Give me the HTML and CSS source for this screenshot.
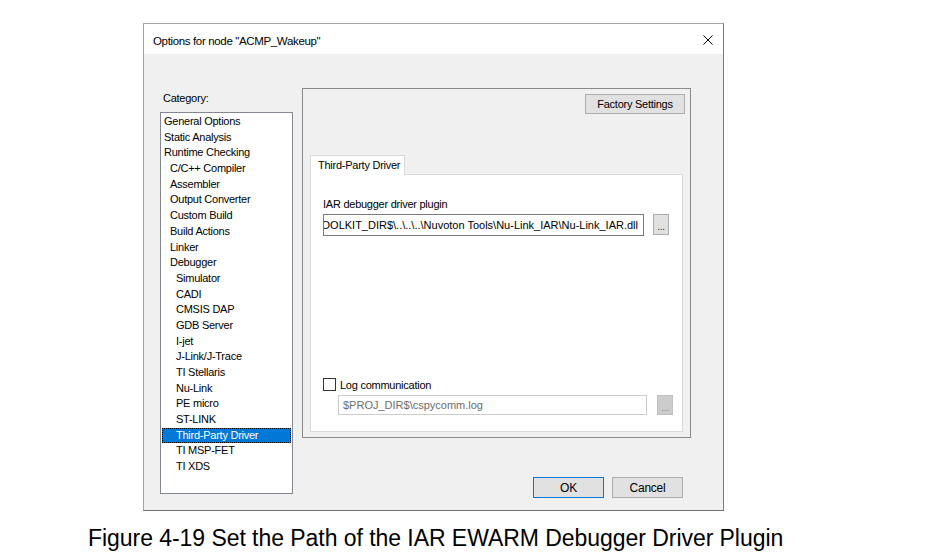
FILE: index.html
```html
<!DOCTYPE html>
<html lang="en">
<head>
    <meta charset="UTF-8">
    <title>Options for node "ACMP_Wakeup"</title>
    <link rel="stylesheet" href="styles.css">
</head>
<body>
    <div class="dialog">
        <div class="titlebar">
            <span class="title">Options for node "ACMP_Wakeup"</span>
            <svg class="close" width="10" height="10" viewBox="0 0 10 10">
                <path d="M0.5 0.5 L9.5 9.5 M9.5 0.5 L0.5 9.5" stroke="#000" stroke-width="1" fill="none"/>
            </svg>
        </div>

        <div class="dialog-body">
            <div class="category">
                <div class="category-label">Category:</div>
                <ul class="category-list">
                    <li>General Options</li>
                    <li>Static Analysis</li>
                    <li>Runtime Checking</li>
                    <li class="lvl1">C/C++ Compiler</li>
                    <li class="lvl1">Assembler</li>
                    <li class="lvl1">Output Converter</li>
                    <li class="lvl1">Custom Build</li>
                    <li class="lvl1">Build Actions</li>
                    <li class="lvl1">Linker</li>
                    <li class="lvl1">Debugger</li>
                    <li class="lvl2">Simulator</li>
                    <li class="lvl2">CADI</li>
                    <li class="lvl2">CMSIS DAP</li>
                    <li class="lvl2">GDB Server</li>
                    <li class="lvl2">I-jet</li>
                    <li class="lvl2">J-Link/J-Trace</li>
                    <li class="lvl2">TI Stellaris</li>
                    <li class="lvl2">Nu-Link</li>
                    <li class="lvl2">PE micro</li>
                    <li class="lvl2">ST-LINK</li>
                    <li class="lvl2 selected">Third-Party Driver</li>
                    <li class="lvl2">TI MSP-FET</li>
                    <li class="lvl2">TI XDS</li>
                </ul>
            </div>

            <div class="right">
                <div class="panel">
                    <div class="panel-top">
                        <button class="btn factory">Factory Settings</button>
                    </div>
                    <div class="tabs">
                        <div class="tab">Third-Party Driver</div>
                    </div>
                    <div class="tab-page">
                        <div class="field-label">IAR debugger driver plugin</div>
                        <div class="field-row">
                            <div class="textbox"><span>$TOOLKIT_DIR$\..\..\..\Nuvoton Tools\Nu-Link_IAR\Nu-Link_IAR.dll</span></div>
                            <button class="btn browse">...</button>
                        </div>

                        <div class="check">
                            <span class="box"></span>
                            <span>Log communication</span>
                        </div>
                        <div class="field-row log-row">
                            <div class="textbox disabled"><span>$PROJ_DIR$\cspycomm.log</span></div>
                            <button class="btn browse disabled">...</button>
                        </div>
                    </div>
                </div>

                <div class="buttons">
                    <button class="btn default">OK</button>
                    <button class="btn">Cancel</button>
                </div>
            </div>
        </div>
    </div>

    <p class="caption">Figure 4-19 Set the Path of the IAR EWARM Debugger Driver Plugin</p>
</body>
</html>
```

FILE: styles.css
```css
body {
    margin: 0;
    padding: 0;
    background: #fff;
    font-family: "Liberation Sans", Arial, sans-serif;
    color: #000;
}
.dialog {
    box-sizing: border-box;
    width: 581px;
    height: 488px;
    margin: 23px 0 0 143px;
    border: 1px solid #a3a3a3;
    border-right-color: #7c7c7c;
    border-bottom-color: #6e6e6e;
    background: #f0f0f0;
    display: flex;
    flex-direction: column;
    font-size: 11px;
    letter-spacing: -0.25px;
}
.titlebar {
    height: 30px;
    background: #fff;
    display: flex;
    align-items: center;
    justify-content: space-between;
    padding: 0 10px 0 9px;
}
.title {
    font-size: 11.5px;
    letter-spacing: -0.35px;
    padding-top: 3px;
}
.close {
    margin-top: 1px;
}
.dialog-body {
    flex: 1;
    display: flex;
}
.category {
    margin-left: 16px;
    padding-top: 37px;
}
.category-label {
    height: 14px;
    line-height: 14px;
    padding-left: 3px;
    margin-bottom: 7px;
}
.category-list {
    box-sizing: border-box;
    width: 133px;
    height: 382px;
    margin: 0;
    padding: 1px 0 0;
    list-style: none;
    background: #fff;
    border: 1px solid #828790;
}
.category-list li {
    height: 15.7px;
    line-height: 15.7px;
    padding-left: 3px;
    white-space: nowrap;
}
.category-list li.lvl1 {
    padding-left: 9px;
}
.category-list li.lvl2 {
    padding-left: 15px;
}
.category-list li.selected {
    margin: 0 1px;
    padding-left: 13px;
    height: 13.7px;
    line-height: 13.7px;
    background: #0078d7;
    color: #fff;
    border: 1px dotted #000;
}
.right {
    flex: 1;
    padding: 34px 0 0 9px;
    display: flex;
    flex-direction: column;
}
.panel {
    box-sizing: border-box;
    width: 389px;
    height: 350px;
    border: 1px solid #8a8a8a;
    display: flex;
    flex-direction: column;
}
.panel-top {
    display: flex;
    justify-content: flex-end;
    padding: 5px 5px 0 0;
}
.btn {
    box-sizing: border-box;
    font-family: "Liberation Sans", Arial, sans-serif;
    font-size: 11px;
    letter-spacing: -0.25px;
    color: #000;
    background: #e1e1e1;
    border: 1px solid #adadad;
    padding: 0;
    margin: 0;
}
.factory {
    width: 100px;
    height: 20px;
}
.tabs {
    display: flex;
    padding-left: 7px;
    margin-top: 41px;
}
.tab {
    box-sizing: border-box;
    height: 20px;
    line-height: 19px;
    width: 95px;
    padding-left: 7px;
    white-space: nowrap;
    background: #fff;
    border: 1px solid #d9d9d9;
    border-bottom: none;
    margin-bottom: -1px;
    position: relative;
    z-index: 1;
}
.tab-page {
    box-sizing: border-box;
    width: 373px;
    height: 258px;
    margin-left: 7px;
    background: #fff;
    border: 1px solid #d9d9d9;
    padding: 22px 0 0 12px;
}
.field-label {
    height: 14px;
    line-height: 14px;
    margin-bottom: 3px;
}
.field-row {
    display: flex;
    align-items: flex-start;
}
.textbox {
    box-sizing: border-box;
    width: 321px;
    height: 22px;
    border: 1px solid #7a7a7a;
    background: #fff;
    display: flex;
    align-items: center;
    justify-content: flex-end;
    overflow: hidden;
    white-space: nowrap;
    padding: 0 5px 0 1px;
    letter-spacing: 0;
}
.textbox span {
    flex-shrink: 0;
}
.browse {
    width: 16px;
    height: 21px;
    margin-left: 9px;
    line-height: 24px;
    font-size: 10px;
    color: #333;
}
.check {
    display: flex;
    align-items: center;
    margin-top: 142px;
    height: 13px;
}
.box {
    box-sizing: border-box;
    width: 13px;
    height: 13px;
    border: 1px solid #333;
    background: #fff;
    margin-right: 4px;
}
.log-row {
    margin-top: 4px;
    padding-left: 15px;
}
.textbox.disabled {
    width: 309px;
    height: 20px;
    border-color: #cccccc;
    color: #6d6d6d;
    justify-content: flex-start;
    padding-left: 4px;
}
.browse.disabled {
    height: 20px;
    background: #cccccc;
    border-color: #bfbfbf;
    color: #8a8a8a;
    margin-left: 10px;
}
.buttons {
    display: flex;
    justify-content: flex-end;
    gap: 8px;
    padding-right: 40px;
    margin-top: 39px;
}
.buttons .btn {
    width: 71px;
    height: 21px;
    font-size: 12px;
}
.btn.default {
    border-color: #0078d7;
}
.caption {
    margin: 14px 0 0 88px;
    font-size: 23px;
    line-height: 26px;
    letter-spacing: -0.05px;
}
```
